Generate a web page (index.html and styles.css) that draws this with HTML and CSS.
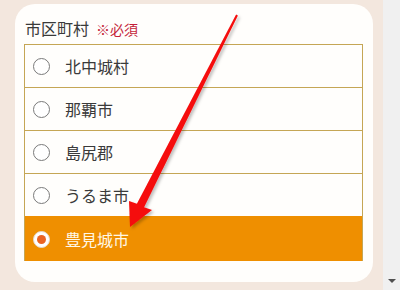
FILE: index.html
```html
<!DOCTYPE html>
<html lang="ja">
<head>
<meta charset="utf-8">
<link rel="stylesheet" href="styles.css">
</head>
<body>
<div class="page">
  <main class="stage">
    <section class="card">
      <div class="label">市区町村<span class="req">※必須</span></div>
      <ul class="options">
        <li class="opt"><span class="radio"></span><span class="name">北中城村</span></li>
        <li class="opt"><span class="radio"></span><span class="name">那覇市</span></li>
        <li class="opt"><span class="radio"></span><span class="name">島尻郡</span></li>
        <li class="opt"><span class="radio"></span><span class="name">うるま市</span></li>
        <li class="opt selected"><span class="radio"></span><span class="name">豊見城市</span></li>
      </ul>
    </section>
  </main>
  <div class="scrollbar"><span class="arrow-down"></span></div>
  <svg class="annot" width="400" height="290" viewBox="0 0 400 290">
    <defs>
      <filter id="sh" x="-20%" y="-20%" width="140%" height="140%">
        <feDropShadow dx="2" dy="2" stdDeviation="1.5" flood-color="#000" flood-opacity="0.25"/>
      </filter>
    </defs>
    <polygon filter="url(#sh)" fill="#f50d0d" points="237.9,15.4 144.1,207.3 152,210 130,227 129,201 136.9,203.7 236.1,14.6"/>
  </svg>
</div>
</body>
</html>
```

FILE: styles.css
```css
* { box-sizing: border-box; }
html, body { margin: 0; padding: 0; }
body {
  font-family: "Noto Sans CJK JP", "Noto Sans", sans-serif;
  color: #333;
  width: 400px;
  height: 290px;
  overflow: hidden;
}
.page {
  position: relative;
  display: flex;
  width: 400px;
  height: 290px;
}
.stage {
  width: 383px;
  height: 290px;
  background: #f3e7de;
  padding: 4px 10px 8px 15px;
  display: flex;
}
.card {
  flex: 1;
  background: #fffefc;
  border-radius: 20px;
  padding: 12px 10px 0 9px;
}
.label {
  height: 24px;
  line-height: 24px;
  font-size: 16px;
  margin: 0 0 4px 1px;
  color: #3a3a3a;
}
.req {
  font-size: 14px;
  color: #c41e3a;
  margin-left: 7px;
}
.options {
  list-style: none;
  margin: 0;
  padding: 0;
  border-left: 1px solid #c5a655;
  border-right: 1px solid #c5a655;
}
.opt {
  height: 43px;
  border-top: 1px solid #c5a655;
  display: flex;
  align-items: center;
  padding-left: 8px;
  font-size: 16px;
  color: #3a3a3a;
}
.radio {
  width: 17px;
  height: 17px;
  border: 1px solid #7a7a7a;
  border-radius: 50%;
  background: #fff;
  margin-right: 15px;
  flex: none;
  display: flex;
  align-items: center;
  justify-content: center;
}
.opt.selected {
  height: 45px;
  background: #ef8f00;
  border-top-color: #ef8f00;
  color: #fff8e6;
}
.opt.selected .radio {
  border-color: #e6d8cc;
}
.opt.selected .radio::after {
  content: "";
  width: 9px;
  height: 9px;
  border-radius: 50%;
  background: #ea6424;
}
.scrollbar {
  width: 17px;
  height: 290px;
  background: #f0f0f0;
  display: flex;
  flex-direction: column;
  justify-content: flex-end;
  align-items: center;
  padding-bottom: 7px;
}
.arrow-down {
  width: 0;
  height: 0;
  border-left: 4px solid transparent;
  border-right: 4px solid transparent;
  border-top: 4px solid #505050;
}
.annot {
  position: absolute;
  left: 0;
  top: 0;
  pointer-events: none;
}
```
